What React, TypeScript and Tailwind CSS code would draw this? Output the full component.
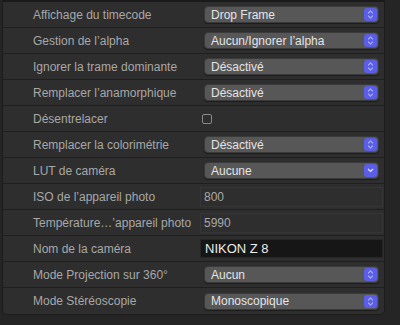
import React from "react";

type Row =
  | { label: string; kind: "popup"; value: string; chevron?: boolean }
  | { label: string; kind: "check" }
  | { label: string; kind: "text"; value: string }
  | { label: string; kind: "field"; value: string };

const rows: Row[] = [
  { label: "Affichage du timecode", kind: "popup", value: "Drop Frame" },
  { label: "Gestion de l’alpha", kind: "popup", value: "Aucun/Ignorer l’alpha" },
  { label: "Ignorer la trame dominante", kind: "popup", value: "Désactivé" },
  { label: "Remplacer l’anamorphique", kind: "popup", value: "Désactivé" },
  { label: "Désentrelacer", kind: "check" },
  { label: "Remplacer la colorimétrie", kind: "popup", value: "Désactivé" },
  { label: "LUT de caméra", kind: "popup", value: "Aucune", chevron: true },
  { label: "ISO de l’appareil photo", kind: "text", value: "800" },
  { label: "Température…’appareil photo", kind: "text", value: "5990" },
  { label: "Nom de la caméra", kind: "field", value: "NIKON Z 8" },
  { label: "Mode Projection sur 360°", kind: "popup", value: "Aucun" },
  { label: "Mode Stéréoscopie", kind: "popup", value: "Monoscopique" },
];

function Stepper({ chevron }: { chevron?: boolean }) {
  return (
    <div className="w-[13px] h-[13px] rounded-[3px] bg-[#5b5ee6] flex items-center justify-center">
      {chevron ? (
        <svg width="7" height="5" viewBox="0 0 7 5" fill="none">
          <path d="M1 1l2.5 2.5L6 1" stroke="#e8e8ff" strokeWidth="1.2" />
        </svg>
      ) : (
        <svg width="7" height="9" viewBox="0 0 7 9" fill="none">
          <path d="M1.2 3.2L3.5 1l2.3 2.2M1.2 5.8L3.5 8l2.3-2.2" stroke="#e8e8ff" strokeWidth="1" />
        </svg>
      )}
    </div>
  );
}

function Control({ row }: { row: Row }) {
  if (row.kind === "popup") {
    return (
      <div className="ml-[4px] w-[175px] h-[17px] rounded-[4px] bg-[#575757] border border-[#3a3a3a] flex items-center justify-between pl-[6px] pr-[1px] shadow-[0_1px_1px_rgba(0,0,0,0.4)]">
        <span className="text-[12px] text-[#e4e4e4] leading-none">{row.value}</span>
        <Stepper chevron={row.chevron} />
      </div>
    );
  }
  if (row.kind === "check") {
    return <div className="ml-[2px] w-[10px] h-[10px] rounded-[2px] border border-[#8a8a8a] bg-[#2e2e2e]" />;
  }
  if (row.kind === "text") {
    return (
      <div className="w-[183px] h-[20px] border border-[#363636] flex items-center pl-[3px]">
        <span className="text-[12px] text-[#a9a9a9]">{row.value}</span>
      </div>
    );
  }
  return (
    <div className="w-[183px] h-[19px] bg-[#161616] border border-[#262626] flex items-center pl-[4px]">
      <span className="text-[13px] text-[#ececec]">{row.value}</span>
    </div>
  );
}

export default function App() {
  return (
    <div
      className="w-[400px] h-[325px] bg-[#252525] overflow-hidden"
      style={{ fontFamily: '"Liberation Sans", Arial, sans-serif' }}
    >
      <div className="ml-[2px] w-[383px] bg-[#2e2e2e] border-t-2 border-t-[#1a1a1a] border-x border-b border-[#1c1c1c] rounded-b-[5px] overflow-hidden">
        {rows.map((row, i) => (
          <div
            key={row.label}
            className={`flex items-center h-[26px] ${i < rows.length - 1 ? "border-b border-[#1f1f1f]" : ""}`}
          >
            <div className="w-[197px] pl-[30px] text-[12px] text-[#a8a8a8] whitespace-nowrap">{row.label}</div>
            <Control row={row} />
          </div>
        ))}
      </div>
    </div>
  );
}
